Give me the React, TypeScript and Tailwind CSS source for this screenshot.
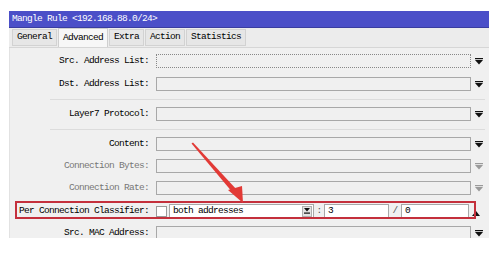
import React from "react";

const font = { fontFamily: '"Liberation Mono", "DejaVu Sans Mono", monospace' };

function DownArrow({ disabled }: { disabled?: boolean }) {
  return (
    <svg width="8" height="7" viewBox="0 0 8 7" className={disabled ? "text-[#9a9a9a]" : "text-[#111]"}>
      <rect x="0" y="0" width="8" height="1.2" fill="currentColor" />
      <polygon points="0,2 8,2 4,6.5" fill="currentColor" />
    </svg>
  );
}

function Field({ dotted }: { dotted?: boolean }) {
  return (
    <div
      className={
        "h-[14px] w-[315px] bg-[#f0f0f0] border " +
        (dotted ? "border-dotted border-[#888]" : "border-[#a8a8a8]")
      }
    />
  );
}

function Row({
  label,
  mt,
  disabled,
  dotted,
}: {
  label: string;
  mt: string;
  disabled?: boolean;
  dotted?: boolean;
}) {
  return (
    <div className={"flex items-center h-[14px] " + mt}>
      <div
        className={
          "w-[139px] text-right whitespace-nowrap " + (disabled ? "text-[#777]" : "text-[#000]")
        }
      >
        {label}
      </div>
      <div className="ml-[7px]">
        <Field dotted={dotted} />
      </div>
      <div className="w-[15px] flex justify-center pt-[1px]">
        <DownArrow disabled={disabled} />
      </div>
    </div>
  );
}

const tabs = ["General", "Advanced", "Extra", "Action", "Statistics"];

export default function App() {
  return (
    <div className="relative w-[499px] h-[255px] bg-white overflow-hidden text-[9.5px] tracking-[-0.7px]" style={font}>
      <div className="ml-[9px] pt-[11px] w-[480px]">
        {/* title bar */}
        <div className="h-[17px] bg-[#4b4fc8] border-b border-[#3a3da0] flex items-center pl-[3px] text-white">
          Mangle Rule &lt;192.168.88.0/24&gt;
        </div>

        {/* tabs */}
        <div className="h-[20px] bg-[#ececec] flex items-end pl-[3px] gap-[1px] border-b border-[#d6d6d6]">
          {tabs.map((t) =>
            t === "Advanced" ? (
              <div
                key={t}
                className="h-[19px] px-[4px] bg-[#f7f7f7] border border-b-0 border-[#cfcfcf] flex items-start pt-[2px] text-black"
              >
                {t}
              </div>
            ) : (
              <div
                key={t}
                className="h-[17px] px-[4px] bg-[#e6e6e6] border border-[#d2d2d2] flex items-center text-black mb-[1px]"
              >
                {t}
              </div>
            )
          )}
        </div>

        {/* panel */}
        <div className="relative h-[190px] bg-[#f0f0f0] overflow-hidden border-l border-[#e2e2e2]">
          <Row label="Src. Address List:" mt="mt-[6px]" dotted />
          <Row label="Dst. Address List:" mt="mt-[9px]" />
          <div className="mt-[8px] h-px bg-[#dcdcdc] ml-[40px] mr-[4px]" />
          <Row label="Layer7 Protocol:" mt="mt-[7px]" />
          <div className="mt-[8px] h-px bg-[#dcdcdc] ml-[40px] mr-[4px]" />
          <Row label="Content:" mt="mt-[7px]" />
          <Row label="Connection Bytes:" mt="mt-[8px]" disabled />
          <Row label="Connection Rate:" mt="mt-[8px]" disabled />

          {/* per connection classifier */}
          <div className="relative flex items-center h-[14px] mt-[9px]">
            <span className="absolute left-[5px] top-[-3px] w-[461px] h-[18px] border-2 border-[#c4303c]" />
            <div className="w-[139px] text-right whitespace-nowrap text-black">Per Connection Classifier:</div>
            <div className="ml-[7px] w-[11px] h-[11px] bg-white border border-[#9a9a9a]" />
            <div className="ml-[2px] w-[145px] h-[14px] bg-white border border-[#a8a8a8] flex items-center pl-[3px] pr-[1px] text-black">
              <span className="flex-1">both addresses</span>
              <span className="w-[10px] h-[11px] bg-[#e4e4e4] border border-[#b0b0b0] flex items-center justify-center">
                <svg width="6" height="6" viewBox="0 0 6 6">
                  <polygon points="0,0 6,0 3,3.5" fill="#111" />
                  <rect x="0" y="4.5" width="6" height="1.2" fill="#111" />
                </svg>
              </span>
            </div>
            <span className="w-[10px] text-center text-[#555]">:</span>
            <div className="w-[65px] h-[14px] bg-white border border-[#a8a8a8] flex items-center pl-[3px] text-black">3</div>
            <span className="w-[12px] text-center text-[#555]">/</span>
            <div className="w-[68px] h-[14px] bg-white border border-[#a8a8a8] flex items-center pl-[3px] text-black">0</div>
            <div className="w-[14px] flex justify-center pt-[4px]">
              <svg width="8" height="5" viewBox="0 0 8 5">
                <polygon points="0,5 8,5 4,0" fill="#111" />
              </svg>
            </div>
          </div>

          <Row label="Src. MAC Address:" mt="mt-[8px]" />
        </div>
      </div>

      {/* annotation arrow */}
      <svg className="absolute inset-0 pointer-events-none" width="499" height="255" viewBox="0 0 499 255">
        <polygon points="191.5,143.5 193,142.5 237,190 233,193" fill="#e23a36" />
        <polygon points="228,190 242,186 243,203" fill="#e23a36" />
      </svg>
    </div>
  );
}
